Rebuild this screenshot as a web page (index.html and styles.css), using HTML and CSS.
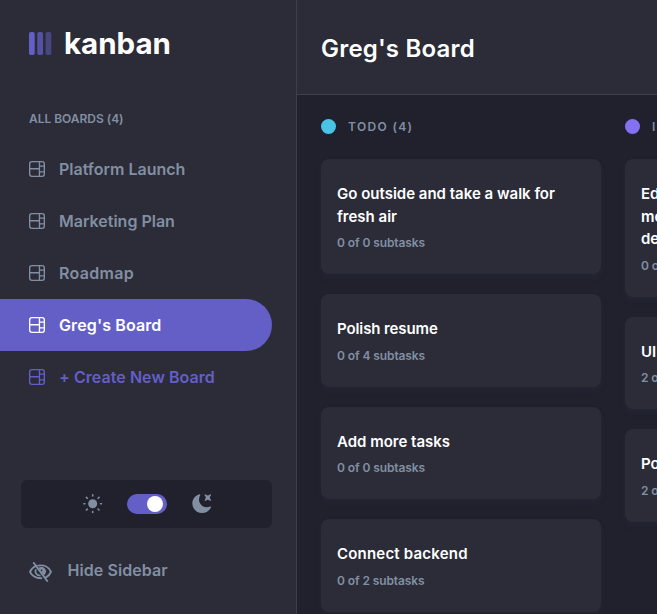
FILE: index.html
```html
<!DOCTYPE html>
<html lang="en">
<head>
<meta charset="utf-8">
<title>kanban</title>
<link rel="stylesheet" href="styles.css">
</head>
<body>
<svg class="defs" aria-hidden="true">
  <symbol id="board" viewBox="0 0 16 16"><path d="M0 2.889A2.889 2.889 0 0 1 2.889 0H13.11A2.889 2.889 0 0 1 16 2.889V13.11A2.888 2.888 0 0 1 13.111 16H2.89A2.889 2.889 0 0 1 0 13.111V2.89Zm1.333 5.555v4.667c0 .859.697 1.556 1.556 1.556h6.889V8.444H1.333Zm8.445-1.333V1.333h-6.89A1.556 1.556 0 0 0 1.334 2.89V7.11h8.445Zm4.889-1.333H11.11v4.444h3.556V5.778Zm0 5.778H11.11v3.11h2a1.556 1.556 0 0 0 1.556-1.555v-1.555Zm0-7.112V2.89a1.555 1.555 0 0 0-1.556-1.556h-2v3.111h3.556Z"/></symbol>
</svg>
<div class="app">
  <aside class="sidebar">
    <div class="logo">
      <svg width="23" height="24" viewBox="0 0 23 24" fill="#635fc7"><rect y="1" width="5.7" height="23" rx="1.8"/><rect x="8.300" y="1" width="5.700" height="23" rx="1.800" opacity=".75"/><rect x="16.600" y="1" width="5.700" height="23" rx="1.800" opacity=".5"/></svg>
      <span class="logo-text">kanban</span>
    </div>
    <h2 class="boards-title">ALL BOARDS (4)</h2>
    <nav class="boards">
      <a class="board"><svg><use href="#board"/></svg><span>Platform Launch</span></a>
      <a class="board"><svg><use href="#board"/></svg><span>Marketing Plan</span></a>
      <a class="board roadmap"><svg><use href="#board"/></svg><span>Roadmap</span></a>
      <a class="board active"><svg><use href="#board"/></svg><span>Greg's Board</span></a>
      <a class="board create"><svg><use href="#board"/></svg><span>+ Create New Board</span></a>
    </nav>
    <div class="theme">
      <svg width="20" height="20" viewBox="0 0 20 20"><circle cx="9.700" cy="9.700" r="4.500" fill="#828fa3"/><path d="M9.700.9v1M9.700 17.500v1M.9 9.700h1M17.500 9.700h1M3.400 3.400l.9.9M15.100 15.100l.9.900M3.400 16l.9-.9M15.100 4.300l.9-.9" stroke="#828fa3" stroke-width="1.600" stroke-linecap="round"/></svg>
      <span class="toggle"><span class="knob"></span></span>
      <svg width="20" height="20" viewBox="-.4 .4 16 16" fill="#828fa3"><path d="M6.474.682c.434-.11.718.406.481.78A6.067 6.067 0 0 0 6.01 4.72c0 3.418 2.827 6.187 6.314 6.187.89.002 1.77-.182 2.584-.54.408-.18.894.165.724.57-1.16 2.775-3.944 4.73-7.194 4.73-4.292 0-7.771-3.41-7.771-7.615 0-3.541 2.466-6.518 5.807-7.37Zm8.433.07c.442-.294.969.232.674.674l-.525.787a1.943 1.943 0 0 0 0 2.157l.525.788c.295.441-.232.968-.674.673l-.787-.525a1.943 1.943 0 0 0-2.157 0l-.786.525c-.442.295-.97-.232-.675-.673l.525-.788a1.943 1.943 0 0 0 0-2.157l-.525-.787c-.295-.442.232-.968.674-.673l.787.525a1.943 1.943 0 0 0 2.157 0l.787-.525Z"/></svg>
    </div>
    <div class="hide">
      <svg width="23" height="20" viewBox="0 0 23 20" fill="none" stroke="#828fa3"><path d="M7.500 3.800C4.500 4.800 2.300 6.900 1 9.900 2.900 13.800 6.600 16.300 12.300 16.200M9.500 3.600C15 2.700 20 5.200 22 9.900 21 12.300 19.200 14.300 17 15.300" stroke-width="1.900" stroke-linecap="round" stroke-linejoin="round"/><path d="M6.800 7.300C5.600 10.800 7.600 13.700 11.500 13.700" stroke-width="1.800"/><path d="M9.300 5.700C13 3.600 17.400 6 16.900 10 16.700 11.400 16 12.500 15 13.300Z" fill="#828fa3" stroke="none"/><circle cx="12.600" cy="8.300" r=".9" fill="#2b2c37" stroke="none"/><path d="M4.800 1 18.200 19" stroke-width="1.900" stroke-linecap="round"/></svg>
      <span>Hide Sidebar</span>
    </div>
  </aside>
  <main class="main">
    <header class="header"><h1>Greg's Board</h1></header>
    <div class="columns">
      <section class="column">
        <h3 class="status"><i class="dot todo"></i><span>TODO (4)</span></h3>
        <article class="card"><h4>Go outside and take a walk for<br>fresh air</h4><p>0 of 0 subtasks</p></article>
        <article class="card"><h4 class="tight">Polish resume</h4><p>0 of 4 subtasks</p></article>
        <article class="card"><h4>Add more tasks</h4><p>0 of 0 subtasks</p></article>
        <article class="card"><h4 class="wide">Connect backend</h4><p>0 of 2 subtasks</p></article>
      </section>
      <section class="column">
        <h3 class="status"><i class="dot doing"></i><span>I</span></h3>
        <article class="card"><h4>Ed<br>mo<br>de</h4><p>0 of</p></article>
        <article class="card"><h4>UI</h4><p>2 of</p></article>
        <article class="card"><h4>Po</h4><p>2 of</p></article>
      </section>
    </div>
  </main>
</div>
</body>
</html>
```
FILE: styles.css
```css
* { box-sizing: border-box; margin: 0; padding: 0; }
body { width: 657px; height: 614px; overflow: hidden; background: #20212c; font-family: Inter, "Liberation Sans", sans-serif; font-weight: 600; }
.defs { display: none; }
.app { display: flex; height: 614px; }
.sidebar { flex: none; width: 297px; display: flex; flex-direction: column; background: #2b2c37; border-right: 1px solid #3e3f4e; color: #828fa3; }
.logo { display: flex; gap: 12px; margin: 31px 0 0 29px; height: 24px; }
.logo-text { color: #fff; font-size: 29.5px; font-weight: 700; line-height: 24px; letter-spacing: 0; white-space: nowrap; }
.boards-title { margin: 54px 0 0 29px; font-size: 12px; line-height: 20px; font-weight: 600; letter-spacing: -0.03px; }
.boards { margin-top: 14px; }
.board { display: flex; align-items: center; gap: 14px; width: 272px; height: 52px; padding-left: 29px; border-radius: 0 26px 26px 0; font-size: 16px; white-space: nowrap; }
.board svg { flex: none; width: 16px; height: 16px; fill: currentColor; }
.roadmap { letter-spacing: 0.3px; }
.active { background: #635fc7; color: #fff; letter-spacing: 0.12px; }
.create { color: #635fc7; letter-spacing: 0.06px; }
.theme { display: flex; align-items: center; justify-content: center; gap: 24px; width: 251px; height: 48px; margin: 77px 0 0 21px; border-radius: 6px; background: #20212c; }
.toggle { display: flex; align-items: center; justify-content: flex-end; width: 40px; height: 20px; padding-right: 4px; border-radius: 10px; background: #635fc7; }
.knob { width: 16px; height: 16px; border-radius: 50%; background: #fff; }
.hide { display: flex; align-items: center; gap: 15.5px; height: 24px; margin: 30px 0 0 29px; font-size: 16px; letter-spacing: 0.08px; }
.hide svg { margin-top: 3px; }
.hide span { line-height: 24px; margin-top: -1px; }
.main { flex: 1; min-width: 0; overflow: hidden; }
.header { display: flex; align-items: center; height: 95px; padding: 2px 0 0 24px; border-bottom: 1px solid #3e3f4e; background: #2b2c37; color: #fff; }
.header h1 { font-size: 24px; font-weight: 600; letter-spacing: 0.2px; white-space: nowrap; }
.columns { display: flex; gap: 24px; padding: 24px 0 0 24px; }
.column { flex: none; width: 280px; display: flex; flex-direction: column; gap: 20px; }
.status { display: flex; align-items: center; gap: 12px; height: 15px; margin-bottom: 5px; color: #828fa3; font-size: 12px; font-weight: 600; letter-spacing: 1.35px; }
.dot { width: 15px; height: 15px; border-radius: 50%; }
.todo { background: #49c4e5; }
.doing { background: #8471f2; }
.card { padding: 24px 16px 22px; border-radius: 8px; background: #2b2c37; box-shadow: 0 4px 6px rgba(54, 78, 126, 0.1); }
.card h4 { color: #fff; font-size: 15px; line-height: 22.5px; font-weight: 600; white-space: nowrap; }
.card .wide { letter-spacing: 0.2px; }
.card .tight { letter-spacing: -0.1px; }
.card p { margin-top: 6px; color: #828fa3; font-size: 12px; line-height: 18px; letter-spacing: -0.1px; white-space: nowrap; }
```
